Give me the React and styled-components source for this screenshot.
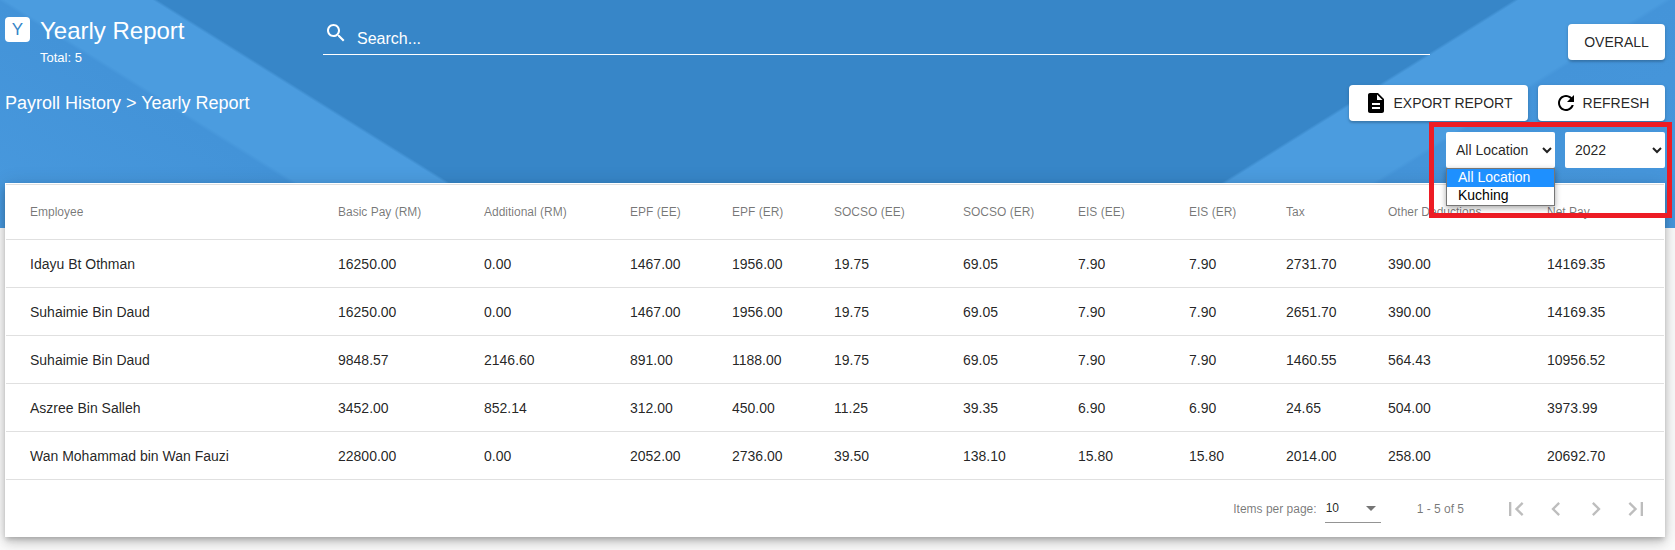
import React from "react";
import styled, { createGlobalStyle } from "styled-components";

const GlobalStyle = createGlobalStyle`
  html, body {
    margin: 0;
    padding: 0;
    background: #fafafa;
    font-family: "Liberation Sans", Arial, sans-serif;
  }
  * {
    box-sizing: border-box;
  }
`;

const Page = styled.div`
  position: relative;
  width: 1675px;
  height: 550px;
  overflow: hidden;
`;

const Header = styled.header`
  height: 228px;
  padding: 17px 10px 0 5px;
  color: #fff;
  background-color: #3786c8;
  background-image:
    linear-gradient(32deg, #4899de 0, #4393d8 192px, #4b9cdf 196px, #4b9cdf 274px, transparent 277px),
    linear-gradient(328deg, #4797dc 0, #4494d9 195px, #4b9cdf 199px, #4b9cdf 276px, transparent 279px);
`;

const TopRow = styled.div`
  display: flex;
  align-items: flex-start;
  height: 68px;
`;

const TitleBlock = styled.div`
  width: 318px;
  display: grid;
  grid-template-columns: 25px auto;
  column-gap: 10px;
`;

const LogoTile = styled.div`
  width: 25px;
  height: 25px;
  border-radius: 4px;
  background: #fff;
  color: #3685c8;
  font-size: 17px;
  line-height: 25px;
  text-align: center;
`;

const Title = styled.div`
  padding-top: 1px;
  font-size: 24px;
  line-height: 25px;
`;

const Total = styled.div`
  grid-column: 2;
  font-size: 13px;
  line-height: 16px;
  margin-top: 7px;
`;

const SearchBar = styled.div`
  width: 1107px;
  height: 38px;
  margin-right: auto;
  padding: 4px 0 0 1px;
  display: flex;
  align-items: flex-start;
  border-bottom: 1px solid #fff;
  svg {
    width: 24px;
    height: 24px;
    fill: #fff;
  }
`;

const SearchText = styled.span`
  margin: 9px 0 0 9px;
  font-size: 16px;
  line-height: 18px;
`;

const Button = styled.button`
  height: 36px;
  padding: 0;
  display: inline-flex;
  align-items: center;
  justify-content: center;
  gap: 5px;
  border: none;
  border-radius: 4px;
  background: #fff;
  color: rgba(0, 0, 0, 0.87);
  font-family: "Liberation Sans", Arial, sans-serif;
  font-size: 14px;
  text-transform: uppercase;
  box-shadow: 0 2px 2px rgba(0, 0, 0, 0.14), 0 1px 4px rgba(0, 0, 0, 0.12);
  svg {
    width: 24px;
    height: 24px;
    fill: #000;
    flex: none;
  }
`;

const OverallButton = styled(Button)`
  width: 97px;
  margin-top: 7px;
`;

const ActionRow = styled.div`
  display: flex;
  align-items: flex-start;
  justify-content: space-between;
`;

const Breadcrumb = styled.div`
  font-size: 18px;
  line-height: 36px;
`;

const ActionButtons = styled.div`
  display: flex;
  gap: 10px;
`;

const ExportButton = styled(Button)`
  width: 179px;
`;

const RefreshButton = styled(Button)`
  width: 127px;
`;

const FilterRow = styled.div`
  display: flex;
  justify-content: flex-end;
  gap: 10px;
  margin-top: 11px;
`;

const LocationFilter = styled.div`
  position: relative;
  height: 36px;
`;

const Select = styled.select`
  width: ${(p) => p.$w}px;
  height: 36px;
  padding: 0 6px;
  border: none;
  border-radius: 2px;
  background: #fff;
  color: rgba(0, 0, 0, 0.87);
  font-family: "Liberation Sans", Arial, sans-serif;
  font-size: 14px;
`;

const OptionList = styled.ul`
  position: absolute;
  top: 36px;
  left: 0;
  z-index: 3;
  width: 109px;
  margin: 0;
  padding: 0;
  list-style: none;
  background: #fff;
  border: 1px solid #767676;
  box-shadow: 0 2px 6px rgba(0, 0, 0, 0.35);
  font-size: 14px;
`;

const OptionItem = styled.li`
  height: 18px;
  padding-left: 11px;
  line-height: 16px;
  color: ${(p) => (p.$active ? "#fff" : "#000")};
  background: ${(p) => (p.$active ? "#1e90ff" : "#fff")};
`;

const Highlight = styled.div`
  position: absolute;
  left: 1429px;
  top: 122px;
  width: 243px;
  height: 96px;
  z-index: 2;
  border: 5px solid #ed1c24;
  pointer-events: none;
`;

const Card = styled.section`
  position: relative;
  width: 1660px;
  height: 354px;
  margin: -45px 0 0 5px;
  padding: 1px 1px 0;
  background: #fff;
  box-shadow: 0 3px 5px -1px rgba(0, 0, 0, 0.2), 0 6px 10px rgba(0, 0, 0, 0.14), 0 1px 18px rgba(0, 0, 0, 0.12);
`;

const Table = styled.table`
  width: 1658px;
  table-layout: fixed;
  border-spacing: 0;
  border-top: 1px solid #e0e0e0;
`;

const Col = styled.col`
  width: ${(p) => p.$w}px;
`;

const HeadCell = styled.th`
  height: 55px;
  padding: 0;
  text-align: left;
  font-size: 12px;
  font-weight: 400;
  color: rgba(0, 0, 0, 0.54);
  border-bottom: 1px solid #e0e0e0;
  &:first-child {
    padding-left: 24px;
  }
`;

const Cell = styled.td`
  height: 48px;
  padding: 0;
  font-size: 14px;
  color: rgba(0, 0, 0, 0.87);
  border-bottom: 1px solid #e0e0e0;
  &:first-child {
    padding-left: 24px;
  }
`;

const Paginator = styled.div`
  height: 57px;
  padding-right: 8px;
  display: flex;
  align-items: center;
  justify-content: flex-end;
  font-size: 12px;
  color: rgba(0, 0, 0, 0.54);
`;

const PageSize = styled.div`
  width: 56px;
  height: 29px;
  margin-left: 8px;
  padding: 7px 0 0 1px;
  display: flex;
  justify-content: space-between;
  border-bottom: 1px solid rgba(0, 0, 0, 0.42);
  color: rgba(0, 0, 0, 0.87);
  line-height: 14px;
`;

const Caret = styled.span`
  width: 0;
  height: 0;
  margin: 5px 5px 0 0;
  border-left: 5px solid transparent;
  border-right: 5px solid transparent;
  border-top: 5px solid rgba(0, 0, 0, 0.54);
`;

const RangeLabel = styled.span`
  margin: 0 32px 0 36px;
`;

const PageButton = styled.span`
  width: 40px;
  height: 40px;
  display: flex;
  align-items: center;
  justify-content: center;
  svg {
    width: 28px;
    height: 28px;
    fill: rgba(0, 0, 0, 0.26);
  }
`;

const columns = [332, 146, 146, 102, 102, 129, 115, 111, 97, 102, 159, 117];

const headings = [
  "Employee",
  "Basic Pay (RM)",
  "Additional (RM)",
  "EPF (EE)",
  "EPF (ER)",
  "SOCSO (EE)",
  "SOCSO (ER)",
  "EIS (EE)",
  "EIS (ER)",
  "Tax",
  "Other Deductions",
  "Net Pay",
];

const rows = [
  ["Idayu Bt Othman", "16250.00", "0.00", "1467.00", "1956.00", "19.75", "69.05", "7.90", "7.90", "2731.70", "390.00", "14169.35"],
  ["Suhaimie Bin Daud", "16250.00", "0.00", "1467.00", "1956.00", "19.75", "69.05", "7.90", "7.90", "2651.70", "390.00", "14169.35"],
  ["Suhaimie Bin Daud", "9848.57", "2146.60", "891.00", "1188.00", "19.75", "69.05", "7.90", "7.90", "1460.55", "564.43", "10956.52"],
  ["Aszree Bin Salleh", "3452.00", "852.14", "312.00", "450.00", "11.25", "39.35", "6.90", "6.90", "24.65", "504.00", "3973.99"],
  ["Wan Mohammad bin Wan Fauzi", "22800.00", "0.00", "2052.00", "2736.00", "39.50", "138.10", "15.80", "15.80", "2014.00", "258.00", "20692.70"],
];

const pageIcons = [
  "M18.41 16.59L13.82 12l4.59-4.59L17 6l-6 6 6 6zM6 6h2v12H6z",
  "M15.41 7.41L14 6l-6 6 6 6 1.41-1.41L10.83 12z",
  "M10 6L8.59 7.41 13.17 12l-4.58 4.59L10 18l6-6z",
  "M5.59 7.41L10.18 12l-4.59 4.59L7 18l6-6-6-6zM16 6h2v12h-2z",
];

const App = () => {
  return (
    <Page>
      <GlobalStyle />
      <Header>
        <TopRow>
          <TitleBlock>
            <LogoTile>Y</LogoTile>
            <Title>Yearly Report</Title>
            <Total>Total: 5</Total>
          </TitleBlock>
          <SearchBar>
            <svg viewBox="0 0 24 24">
              <path d="M15.5 14h-.79l-.28-.27C15.41 12.59 16 11.11 16 9.5 16 5.91 13.09 3 9.5 3S3 5.91 3 9.5 5.91 16 9.5 16c1.61 0 3.09-.59 4.23-1.57l.27.28v.79l5 4.99L20.49 19l-4.99-5zm-6 0C7.01 14 5 11.99 5 9.5S7.01 5 9.5 5 14 7.01 14 9.5 11.99 14 9.5 14z" />
            </svg>
            <SearchText>Search...</SearchText>
          </SearchBar>
          <OverallButton>Overall</OverallButton>
        </TopRow>
        <ActionRow>
          <Breadcrumb>Payroll History &gt; Yearly Report</Breadcrumb>
          <ActionButtons>
            <ExportButton>
              <svg viewBox="0 0 24 24">
                <path d="M14 2H6c-1.1 0-1.99.9-1.99 2L4 20c0 1.1.89 2 1.99 2H18c1.1 0 2-.9 2-2V8l-6-6zm2 16H8v-2h8v2zm0-4H8v-2h8v2zm-3-5V3.5L18.5 9H13z" />
              </svg>
              Export Report
            </ExportButton>
            <RefreshButton>
              <svg viewBox="0 0 24 24">
                <path d="M17.65 6.35C16.2 4.9 14.21 4 12 4c-4.42 0-7.99 3.58-7.99 8s3.57 8 7.99 8c3.73 0 6.84-2.55 7.73-6h-2.08c-.82 2.33-3.04 4-5.65 4-3.31 0-6-2.69-6-6s2.69-6 6-6c1.66 0 3.14.69 4.22 1.78L13 11h7V4l-2.35 2.35z" />
              </svg>
              Refresh
            </RefreshButton>
          </ActionButtons>
        </ActionRow>
        <FilterRow>
          <LocationFilter>
            <Select $w={109} defaultValue="all" aria-label="location">
              <option value="all">All Location</option>
              <option value="kuching">Kuching</option>
            </Select>
            <OptionList>
              <OptionItem $active>All Location</OptionItem>
              <OptionItem>Kuching</OptionItem>
            </OptionList>
          </LocationFilter>
          <Select $w={100} defaultValue="2022" aria-label="year">
            <option value="2022">2022</option>
            <option value="2021">2021</option>
          </Select>
        </FilterRow>
      </Header>
      <Highlight />
      <Card>
        <Table>
          <colgroup>
            {columns.map((w, i) => (
              <Col key={i} $w={w} />
            ))}
          </colgroup>
          <thead>
            <tr>
              {headings.map((h) => (
                <HeadCell key={h}>{h}</HeadCell>
              ))}
            </tr>
          </thead>
          <tbody>
            {rows.map((row, i) => (
              <tr key={i}>
                {row.map((value, j) => (
                  <Cell key={j}>{value}</Cell>
                ))}
              </tr>
            ))}
          </tbody>
        </Table>
        <Paginator>
          <span>Items per page:</span>
          <PageSize>
            10
            <Caret />
          </PageSize>
          <RangeLabel>1 - 5 of 5</RangeLabel>
          {pageIcons.map((d) => (
            <PageButton key={d}>
              <svg viewBox="0 0 24 24">
                <path d={d} />
              </svg>
            </PageButton>
          ))}
        </Paginator>
      </Card>
    </Page>
  );
};

export default App;
